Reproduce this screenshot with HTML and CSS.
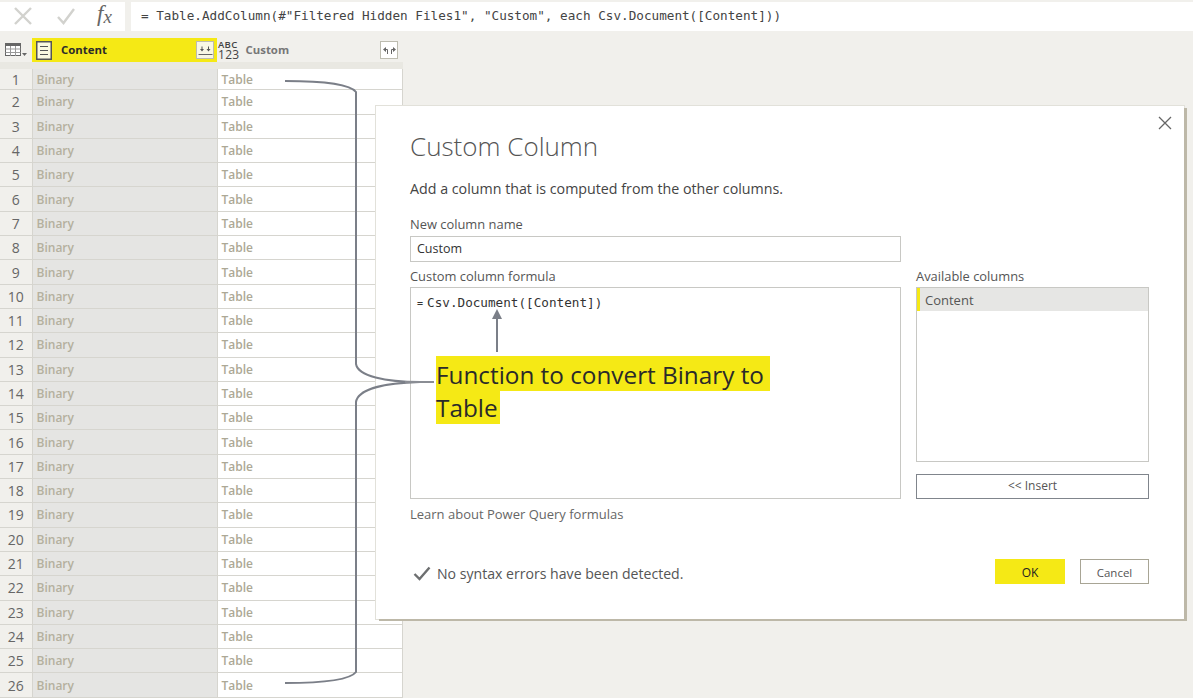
FILE: index.html
```html
<!DOCTYPE html>
<html lang="en">
<head>
    <meta charset="UTF-8">
    <title>Custom Column</title>
    <link rel="stylesheet" href="styles.css">
</head>
<body>
    <div class="formula-bar">
        <div class="formula-tools">
            <svg class="tool-icon" width="20" height="20" viewBox="0 0 20 20"><path d="M2 2 L18 18 M18 2 L2 18" stroke="#d2d2ce" stroke-width="2.4" fill="none"/></svg>
            <svg class="tool-icon" width="20" height="20" viewBox="0 0 20 20"><path d="M2 11 L7.5 17 L18 3" stroke="#d2d2ce" stroke-width="2.4" fill="none"/></svg>
            <span class="fx">f<sub>x</sub></span>
        </div>
        <div class="formula-input">= Table.AddColumn(#"Filtered Hidden Files1", "Custom", each Csv.Document([Content]))</div>
    </div>

    <table class="grid">
        <thead>
            <tr>
                <th class="col-index">
                    <svg width="22" height="14" viewBox="0 0 22 14">
                        <rect x="0.5" y="0.5" width="15" height="12" fill="#fff" stroke="#666"/>
                        <path d="M0.5 2 H15.5" stroke="#666" stroke-width="2"/>
                        <path d="M0.5 6 H15.5 M0.5 9.5 H15.5 M5.5 3 V13 M10.5 3 V13" stroke="#999"/>
                        <path d="M17 10 L22 10 L19.5 13 Z" fill="#666"/>
                    </svg>
                </th>
                <th class="col-content">
                    <div class="head-cell">
                        <svg width="16" height="19" viewBox="0 0 16 19">
                            <rect x="0.75" y="0.75" width="14.5" height="17.5" fill="#fbf9e0" stroke="#555" stroke-width="1.5"/>
                            <path d="M4 5.5 H12 M4 9.5 H12 M4 13.5 H12" stroke="#555"/>
                        </svg>
                        <span class="head-name">Content</span>
                        <span class="head-btn btn-filled">
                            <svg width="15" height="13" viewBox="0 0 15 13">
                                <path d="M4 2.5 V5 M10.5 2.5 V5" stroke="#555" fill="none"/>
                                <path d="M2 5 H6 L4 7.5 Z M8.5 5 H12.5 L10.5 7.5 Z" fill="#555"/>
                                <path d="M0.5 10.5 H14.5" stroke="#666" fill="none"/>
                            </svg>
                        </span>
                    </div>
                </th>
                <th class="col-custom">
                    <div class="head-cell">
                        <span class="type-tag"><span>ABC</span><span class="type-num">123</span></span>
                        <span class="head-name name-muted">Custom</span>
                        <span class="head-btn">
                            <svg width="15" height="13" viewBox="0 0 15 13">
                                <path d="M5.5 10 V5.5 H3.5 M9.5 10 V5.5 H11.5" stroke="#666" fill="none"/>
                                <path d="M4 3 V8 L1 5.5 Z M11 3 V8 L14 5.5 Z" fill="#666"/>
                            </svg>
                        </span>
                    </div>
                </th>
            </tr>
        </thead>
        <tbody>
            <tr><td class="num">1</td><td class="bin">Binary</td><td class="tbl">Table</td></tr>
            <tr><td class="num">2</td><td class="bin">Binary</td><td class="tbl">Table</td></tr>
            <tr><td class="num">3</td><td class="bin">Binary</td><td class="tbl">Table</td></tr>
            <tr><td class="num">4</td><td class="bin">Binary</td><td class="tbl">Table</td></tr>
            <tr><td class="num">5</td><td class="bin">Binary</td><td class="tbl">Table</td></tr>
            <tr><td class="num">6</td><td class="bin">Binary</td><td class="tbl">Table</td></tr>
            <tr><td class="num">7</td><td class="bin">Binary</td><td class="tbl">Table</td></tr>
            <tr><td class="num">8</td><td class="bin">Binary</td><td class="tbl">Table</td></tr>
            <tr><td class="num">9</td><td class="bin">Binary</td><td class="tbl">Table</td></tr>
            <tr><td class="num">10</td><td class="bin">Binary</td><td class="tbl">Table</td></tr>
            <tr><td class="num">11</td><td class="bin">Binary</td><td class="tbl">Table</td></tr>
            <tr><td class="num">12</td><td class="bin">Binary</td><td class="tbl">Table</td></tr>
            <tr><td class="num">13</td><td class="bin">Binary</td><td class="tbl">Table</td></tr>
            <tr><td class="num">14</td><td class="bin">Binary</td><td class="tbl">Table</td></tr>
            <tr><td class="num">15</td><td class="bin">Binary</td><td class="tbl">Table</td></tr>
            <tr><td class="num">16</td><td class="bin">Binary</td><td class="tbl">Table</td></tr>
            <tr><td class="num">17</td><td class="bin">Binary</td><td class="tbl">Table</td></tr>
            <tr><td class="num">18</td><td class="bin">Binary</td><td class="tbl">Table</td></tr>
            <tr><td class="num">19</td><td class="bin">Binary</td><td class="tbl">Table</td></tr>
            <tr><td class="num">20</td><td class="bin">Binary</td><td class="tbl">Table</td></tr>
            <tr><td class="num">21</td><td class="bin">Binary</td><td class="tbl">Table</td></tr>
            <tr><td class="num">22</td><td class="bin">Binary</td><td class="tbl">Table</td></tr>
            <tr><td class="num">23</td><td class="bin">Binary</td><td class="tbl">Table</td></tr>
            <tr><td class="num">24</td><td class="bin">Binary</td><td class="tbl">Table</td></tr>
            <tr><td class="num">25</td><td class="bin">Binary</td><td class="tbl">Table</td></tr>
            <tr><td class="num">26</td><td class="bin">Binary</td><td class="tbl">Table</td></tr>
        </tbody>
    </table>

    <div class="dialog">
        <svg class="dialog-close" width="14" height="14" viewBox="0 0 14 14"><path d="M1 1 L13 13 M13 1 L1 13" stroke="#666" stroke-width="1.3" fill="none"/></svg>
        <h1>Custom Column</h1>
        <p class="dialog-desc">Add a column that is computed from the other columns.</p>
        <label class="field-label">New column name</label>
        <div class="name-input">Custom</div>
        <div class="editor-row">
            <div class="editor-left">
                <label class="field-label">Custom column formula</label>
                <div class="formula-box"><span class="eq">=</span>Csv.Document([Content])</div>
                <div class="learn">Learn about Power Query formulas</div>
            </div>
            <div class="editor-right">
                <label class="field-label">Available columns</label>
                <div class="column-list">
                    <div class="column-item">Content</div>
                </div>
                <div class="insert-btn">&lt;&lt; Insert</div>
            </div>
        </div>
        <div class="dialog-footer">
            <div class="status">
                <svg width="18" height="15" viewBox="0 0 18 15"><path d="M1.5 8 L6.5 13 L16.5 1.5" stroke="#6d6f70" stroke-width="2.4" fill="none"/></svg>
                <span>No syntax errors have been detected.</span>
            </div>
            <div class="footer-btns">
                <div class="btn btn-ok">OK</div>
                <div class="btn btn-cancel">Cancel</div>
            </div>
        </div>
    </div>

    <!-- callout drawn over the grid and dialog -->
    <svg class="callout-lines" width="1193" height="698" viewBox="0 0 1193 698">
        <path d="M285 81 C325 81 350 84 356 92 V364 C358 376 385 382 420 382" stroke="#7b7f88" stroke-width="2" fill="none"/>
        <path d="M285 683 C325 683 350 680 356 672 V402 C358 389 385 383 420 382" stroke="#7b7f88" stroke-width="2" fill="none"/>
        <path d="M405 382 H434" stroke="#8a8d94" stroke-width="2" fill="none"/>
        <path d="M497 352 V318" stroke="#7b7f88" stroke-width="2" fill="none"/>
        <path d="M497 309 L492 319 H502 Z" fill="#7b7f88"/>
    </svg>
    <div class="callout"><span>Function to convert Binary to&nbsp;<br>Table</span></div>
</body>
</html>
```

FILE: styles.css
```css
body {
    margin: 0;
    width: 1193px;
    height: 698px;
    overflow: hidden;
    position: relative;
    background-color: #f1f0ec;
    font-family: "Open Sans", "Noto Sans", sans-serif;
    color: #444;
}

/* formula bar */
.formula-bar {
    display: flex;
    gap: 6px;
    height: 29px;
    padding-top: 2px;
}
.formula-tools {
    display: flex;
    align-items: center;
    width: 125px;
    background-color: #fff;
    box-sizing: border-box;
    padding: 0 0 2px 13px;
    gap: 23px;
}
.tool-icon {
    flex: none;
}
.fx {
    font-family: "Liberation Serif", serif;
    font-style: italic;
    font-size: 23px;
    color: #666;
    margin: 0 0 3px -2px;
    line-height: 20px;
}
.fx sub {
    font-size: 19px;
    line-height: 0;
    vertical-align: -2px;
}
.formula-input {
    flex: 1;
    background-color: #fff;
    padding-left: 10px;
    line-height: 27px;
    font-family: "DejaVu Sans Mono", "Liberation Mono", monospace;
    font-size: 12.67px;
    color: #444;
}

/* data grid */
.grid {
    border-collapse: collapse;
    table-layout: fixed;
    width: 402px;
    margin-top: 7px;
    font-size: 12px;
}
.col-index {
    width: 32px;
}
.col-content {
    width: 185px;
    background-color: #f5e915;
}
.col-custom {
    width: 185px;
    background-color: #f1f0ec;
}
th {
    height: 24px;
    padding: 0;
    border-bottom: 7px solid #e9e8e2;
    text-align: left;
}
.col-index svg {
    display: block;
    margin-left: 5px;
}
.head-cell {
    display: flex;
    align-items: center;
    height: 24px;
    padding: 0 4px;
}
.head-name {
    margin-left: 9px;
    padding-bottom: 2px;
    font-size: 11.4px;
    font-weight: 700;
    color: #2b2b2b;
}
.name-muted {
    margin-left: 6px;
    color: #777;
}
.head-btn {
    display: flex;
    align-items: center;
    justify-content: center;
    width: 18px;
    height: 18px;
    margin-left: auto;
    box-sizing: border-box;
    border: 1px solid #bdbcb0;
    background-color: #fff;
}
.btn-filled {
    background-color: #f8f7e4;
    margin-right: -1px;
}
.type-tag {
    display: flex;
    flex-direction: column;
    font-size: 9.5px;
    font-weight: 600;
    line-height: 9px;
    letter-spacing: 0.3px;
    color: #444;
    margin-left: -3px;
}
.type-num {
    font-size: 12px;
    font-weight: 400;
    line-height: 12px;
}
td {
    height: 24.3px;
    padding: 0;
    box-sizing: border-box;
    border: 1px solid #d6d5cf;
    font-weight: 600;
}
.num {
    border-left: none;
    font-weight: 400;
    font-size: 14px;
    color: #666;
    text-align: center;
    background-color: #f1f0ec;
}
.bin {
    padding-left: 4px;
    background-color: #e5e5e3;
    color: #b4b09e;
}
.tbl {
    padding-left: 4px;
    background-color: #fff;
    color: #aca895;
}

/* dialog */
.dialog {
    position: absolute;
    left: 376px;
    top: 106px;
    width: 808px;
    height: 513px;
    box-sizing: border-box;
    padding: 20px 35px 0 34px;
    background-color: #fff;
    box-shadow: 3px 2px 0 #bdb8a8, 0 0 0 1px #e2e1da;
}
.dialog-close {
    position: absolute;
    top: 10px;
    right: 12px;
}
h1 {
    margin: 0;
    font-size: 26px;
    font-weight: 300;
    line-height: 40px;
    color: #555;
}
.dialog-desc {
    margin: 0;
    padding-top: 13px;
    font-size: 14.25px;
    line-height: 20px;
    color: #444;
}
.field-label {
    display: block;
    font-size: 12.9px;
    line-height: 18px;
    color: #555;
}
.dialog-desc + .field-label {
    margin-top: 16px;
}
.name-input {
    width: 491px;
    height: 26px;
    box-sizing: border-box;
    margin-top: 3px;
    padding-left: 6px;
    border: 1px solid #c8c8c4;
    font-size: 12.5px;
    line-height: 24px;
    color: #333;
}
.editor-row {
    display: flex;
    gap: 15px;
    margin-top: 5px;
}
.editor-left {
    width: 491px;
}
.editor-right {
    width: 233px;
}
.formula-box {
    height: 212px;
    box-sizing: border-box;
    margin-top: 2px;
    padding: 6px 0 0 6px;
    border: 1px solid #c8c8c4;
    font-family: "DejaVu Sans Mono", "Liberation Mono", monospace;
    font-size: 12.67px;
    line-height: 17px;
    color: #333;
}
.eq {
    margin-right: 4px;
    font-size: 10px;
}
.learn {
    margin-top: 6px;
    font-size: 13px;
    line-height: 18px;
    color: #666;
}
.column-list {
    height: 175px;
    box-sizing: border-box;
    margin-top: 2px;
    border: 1px solid #c8c8c4;
}
.column-item {
    height: 23px;
    padding-left: 5px;
    border-left: 3px solid #f5e915;
    background-color: #e6e6e4;
    font-size: 13px;
    line-height: 25px;
    color: #555;
}
.insert-btn {
    height: 25px;
    box-sizing: border-box;
    margin-top: 12px;
    border: 1px solid #80858c;
    font-size: 12px;
    line-height: 22px;
    text-align: center;
    color: #555;
}
.dialog-footer {
    display: flex;
    justify-content: space-between;
    align-items: center;
    margin-top: 36px;
}
.status {
    display: flex;
    align-items: center;
    gap: 6px;
    margin-left: 3px;
    padding-top: 4px;
    font-size: 14.1px;
    color: #555;
}
.footer-btns {
    display: flex;
    gap: 15px;
}
.btn {
    width: 70px;
    height: 25px;
    box-sizing: border-box;
    font-size: 11.5px;
    line-height: 27px;
    text-align: center;
}
.btn-ok {
    background-color: #f5e915;
    font-size: 12px;
    color: #222;
}
.btn-cancel {
    width: 69px;
    border: 1px solid #a8a595;
    line-height: 25px;
    color: #555;
}

/* callout */
.callout-lines {
    position: absolute;
    left: 0;
    top: 0;
}
.callout {
    position: absolute;
    left: 436px;
    top: 358px;
    font-family: "Open Sans", "Noto Sans", sans-serif;
    font-size: 24.3px;
    line-height: 33px;
    color: #2a2a2a;
    white-space: nowrap;
}
.callout span {
    padding: 2px 2px 0 0;
    background-color: #f5e915;
}
```
